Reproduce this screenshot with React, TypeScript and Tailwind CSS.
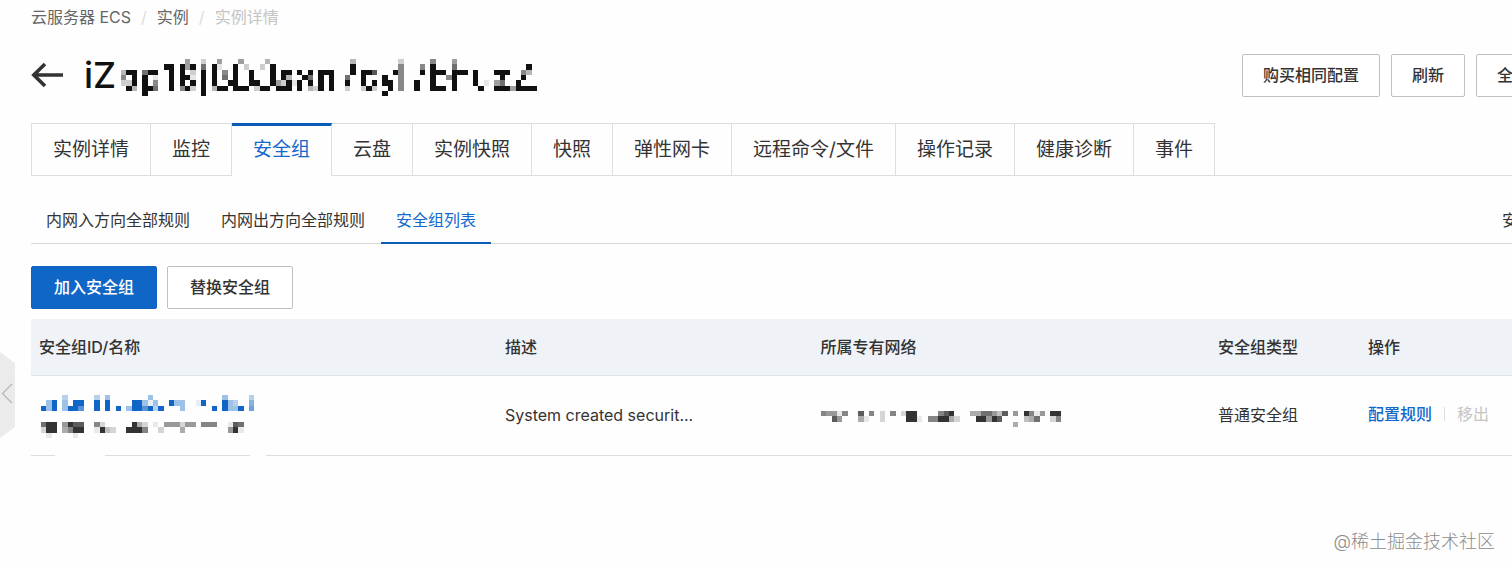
import React, { useState } from 'react'

type BLOCK_TYPE = {
    x: number
    rows: string[]
}

const TABS = ['实例详情', '监控', '安全组', '云盘', '实例快照', '快照', '弹性网卡', '远程命令/文件', '操作记录', '健康诊断', '事件']

const SUB_TABS = ['内网入方向全部规则', '内网出方向全部规则', '安全组列表']

// masked values: 1-8 is a tint, # is the full colour
const INSTANCE_MASK: BLOCK_TYPE[] = [
    { x: 0, rows: ['', '', '3##', '5.#', '22#', '.#3'] },
    { x: 4, rows: ['', '', '6##', '#.1', '#.5', '##6', '#'] },
    { x: 8, rows: ['', '##', '.#', '.#', '.#', '.#'] },
    { x: 11, rows: ['.4', '#4#', '#.2', '##1', '#.#', '5#2'] },
    { x: 15, rows: ['2', '6', '#', '#', '#', '#', '#'] },
    { x: 17, rows: ['.4...4....3', '#1..#.2..2.#', '#.5.#..#...#', '#.6.#..#...#', '#..##..##..#', '3##.###.2##.'] },
    { x: 29, rows: ['', '', '.##.#.#', '.#3..#6', '42#1#.#', '###.#.32'] },
    { x: 37, rows: ['', '', '###', '#.#', '#.#', '#.#'] },
    { x: 42, rows: ['.3', '.#', '.#', '6', '#', '2'] },
    { x: 45, rows: ['', '', '##7', '#', '#.#', '2#2'] },
    { x: 49, rows: ['...2', '...5', '..#5', '#..5', '##.5', '.#.5', '#'] },
    { x: 55, rows: ['', '.5', '.#', '', '#', '#'] },
    { x: 58, rows: ['5...4', '#...6', '###.###', '#..5#', '#...#', '###.#'] },
    { x: 66, rows: ['', '', '#', '#', '#.1', '.#'] },
    { x: 70, rows: ['', '', '###', '.#', '46', '###4'] },
    { x: 74, rows: ['', '..#', '.53', '.#', '#', '####'] },
]

const GROUP_ID_MASK: BLOCK_TYPE[] = [
    { x: 0, rows: ['', '.4#', '#4#'] },
    { x: 4, rows: ['3', '4.##', '4##7'] },
    { x: 10, rows: ['3.4', '#.#', '#.#.#'] },
    { x: 16, rows: ['....4', '.##414', '4##7#3#'] },
    { x: 24, rows: ['', '#44', '..4'] },
    { x: 29, rows: ['', '1#', '...#'] },
    { x: 34, rows: ['4....3', '#43..5', '#44#.6'] },
]

const GROUP_NAME_MASK: BLOCK_TYPE[] = [
    { x: 0, rows: ['7##', '2##', '.1'] },
    { x: 4, rows: ['5#88', '46##', '..1'] },
    { x: 10, rows: ['62', '1#32'] },
    { x: 16, rows: ['.#42', '###6'] },
    { x: 21, rows: ['1.555255', '.2...4'] },
    { x: 30, rows: ['666'] },
    { x: 35, rows: ['187', '5#1'] },
]

const VPC_MASK: BLOCK_TYPE[] = [
    { x: 0, rows: ['65516', '..85'] },
    { x: 7, rows: ['8.6', '41'] },
    { x: 11, rows: ['2.6', '2'] },
    { x: 15, rows: ['2##', '.##1'] },
    { x: 20, rows: ['..68#', '66##42'] },
    { x: 28, rows: ['4477538.5', '.##5#8', '........4'] },
    { x: 38, rows: ['#615', '347'] },
    { x: 43, rows: ['##', '26'] },
]

const Mosaic = ({ blocks, viewBox, label, className }: { blocks: BLOCK_TYPE[], viewBox: string, label: string, className: string }) => (
    <svg viewBox={viewBox} role="img" aria-label={label} fill="currentColor" shapeRendering="crispEdges" className={className}>
        {blocks.map((block) =>
            block.rows.map((row, y) =>
                row.split('').map((cell, i) =>
                    cell === '.' ? null : (
                        <rect
                            key={`${block.x}-${y}-${i}`}
                            x={block.x + i}
                            y={y}
                            width="1"
                            height="1"
                            fillOpacity={cell === '#' ? 1 : Number(cell) / 10}
                        />
                    )
                )
            )
        )}
    </svg>
)

const HeaderButton = ({ children }: { children: React.ReactNode }) => (
    <button type="button" className="h-[43px] shrink-0 whitespace-nowrap rounded-[2px] border border-[#c0c0c0] bg-white px-5 font-medium text-[#333]">
        {children}
    </button>
)

const App = () => {

    const [tab, setTab] = useState('安全组')
    const [subTab, setSubTab] = useState('安全组列表')

    return (
        <div className="relative min-h-screen overflow-hidden bg-[#fefefe] font-[Inter,'Noto_Sans_CJK_SC',sans-serif] text-[16px] leading-6 text-[#333]">
            <div className="-mr-[22px] pl-[31px]">
                <nav aria-label="breadcrumb" className="flex gap-[10px] pt-[5px] text-[#666]">
                    <a href="#ecs">云服务器 ECS</a>
                    <span className="text-[#ddd]">/</span>
                    <a href="#instances">实例</a>
                    <span className="text-[#ddd]">/</span>
                    <span className="text-[#c4c4c4]">实例详情</span>
                </nav>

                <header className="mt-[22px] flex items-center justify-between">
                    <div className="flex items-center">
                        <a href="#back" aria-label="返回">
                            <svg viewBox="0 0 32 26" className="h-[26px] w-8" fill="none" stroke="#333" strokeWidth="3.6">
                                <path d="M2.5 13H32M14 2L2.8 13L14 24" />
                            </svg>
                        </a>
                        <h1 className="ml-[21px] flex items-center text-[36px] font-medium leading-10 text-[#111]">
                            iZ
                            <Mosaic blocks={INSTANCE_MASK} viewBox="0 0 78 7.5" label="实例 ID" className="mt-2 ml-[5px] h-10 w-[416px]" />
                        </h1>
                    </div>
                    <div className="flex gap-[11px]">
                        <HeaderButton>购买相同配置</HeaderButton>
                        <HeaderButton>刷新</HeaderButton>
                        <HeaderButton>全</HeaderButton>
                    </div>
                </header>

                <div role="tablist" className="mt-6 flex text-[19px]">
                    {TABS.map((item) => (
                        <button
                            key={item}
                            type="button"
                            role="tab"
                            aria-selected={item === tab}
                            onClick={() => setTab(item)}
                            className={
                                item === tab
                                    ? 'h-[53px] shrink-0 whitespace-nowrap border-r border-t-3 border-r-[#dedede] border-t-[#0b5cb8] px-[21px] pb-0.5 text-[#1268cc]'
                                    : 'h-[53px] shrink-0 whitespace-nowrap border-y border-r border-[#dedede] px-[21px] first:border-l'
                            }
                        >
                            {item}
                        </button>
                    ))}
                    <div className="grow border-b border-[#dedede]" />
                </div>

                <div className="mt-5 flex justify-between border-b border-[#d8d8d8] pr-4">
                    <div role="tablist" className="-mb-px flex gap-px">
                        {SUB_TABS.map((item) => (
                            <button
                                key={item}
                                type="button"
                                role="tab"
                                aria-selected={item === subTab}
                                onClick={() => setSubTab(item)}
                                className={
                                    item === subTab
                                        ? 'h-12 border-b-2 border-[#0b5cb8] px-[15px] pt-0.5 text-[#1268cc]'
                                        : 'h-12 border-b-2 border-transparent px-[15px] pt-0.5'
                                }
                            >
                                {item}
                            </button>
                        ))}
                    </div>
                    <a href="#rules" className="pt-3">安</a>
                </div>

                <div className="mt-[22px] flex gap-[10px] font-medium">
                    <button type="button" className="h-[43px] rounded-[2px] border border-[#0f62c0] bg-[#1066c6] px-[22px] pb-0.5 text-white">加入安全组</button>
                    <button type="button" className="h-[43px] rounded-[2px] border border-[#c0c0c0] bg-white px-[22px] pb-0.5">替换安全组</button>
                </div>

                <table className="mt-[10px] w-full table-fixed text-left">
                    <thead>
                        <tr className="h-14 border-b border-[#dde2ea] bg-[#eff2f7]">
                            <th className="w-[31%] pl-2 font-medium">安全组ID/名称</th>
                            <th className="w-[21%] pl-2 font-medium">描述</th>
                            <th className="pl-2 font-medium">所属专有网络</th>
                            <th className="w-[150px] pl-2 font-medium">安全组类型</th>
                            <th className="w-[174px] pl-2 font-medium">操作</th>
                        </tr>
                    </thead>
                    <tbody>
                        <tr className="h-20 border-b border-[#dedede]">
                            <td className="relative pt-0.5 pl-2">
                                <a href="#group" className="block pl-0.5">
                                    <Mosaic blocks={GROUP_ID_MASK} viewBox="0 0 42 3" label="安全组 ID" className="h-4 w-56 text-[#1066c6]" />
                                </a>
                                <div className="mt-[11px] pl-0.5">
                                    <Mosaic blocks={GROUP_NAME_MASK} viewBox="0 0 42 3" label="安全组名称" className="h-4 w-56 text-[#333]" />
                                </div>
                                {/* eraser marks over the bottom line */}
                                <span className="absolute -bottom-1 left-6 h-2 w-[50px] rounded-full bg-[#fefefe]" />
                                <span className="absolute -bottom-1 left-[219px] h-2 w-4 rounded-full bg-[#fefefe]" />
                            </td>
                            <td className="truncate pl-2">System created securit...</td>
                            <td className="pl-2">
                                <Mosaic blocks={VPC_MASK} viewBox="0 0 45 3" label="专有网络" className="mt-2 h-4 w-60 text-[#333]" />
                            </td>
                            <td className="pl-2">普通安全组</td>
                            <td className="pl-2">
                                <div className="flex items-center gap-3 pb-0.5">
                                    <a href="#config" className="font-medium text-[#1268cc]">配置规则</a>
                                    <span className="h-3.5 w-px bg-[#ddd]" />
                                    <button type="button" disabled className="text-[#c4c4c4]">移出</button>
                                </div>
                            </td>
                        </tr>
                    </tbody>
                </table>
            </div>

            <button type="button" aria-label="收起" className="absolute left-0 top-[352px]">
                <svg viewBox="0 0 15 86" className="h-[86px] w-[15px]" fill="none">
                    <path d="M0 0L15 11V75L0 86Z" fill="#ebebeb" />
                    <path d="M12 32L2.5 41.5L12 51" stroke="#b8b8b8" strokeWidth="1.3" />
                </svg>
            </button>

            <p className="absolute bottom-[15px] right-[17px] text-[18px] font-light text-[#8c8c8c]">@稀土掘金技术社区</p>
        </div>
    )
}

export default App
